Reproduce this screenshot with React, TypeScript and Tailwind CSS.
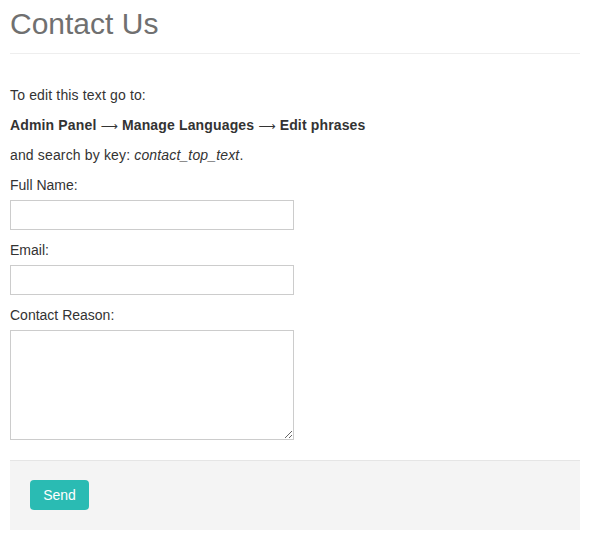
const Arrow = () => (
  <span className="font-normal font-['DejaVu_Sans',sans-serif] text-[12px] leading-none">⟶</span>
);

export default function App() {
  return (
    <div className="w-[596px] min-h-[541px] bg-white px-[10px] text-[14px] leading-[20px] text-[#333] font-['Liberation_Sans',Arial,sans-serif]">
      <div className="w-[570px]">
        <h1 className="pt-[7px] pb-[13px] border-b border-[#eee] text-[30px] leading-[33px] font-normal text-[#707070]">
          Contact Us
        </h1>

        <div className="mt-[31px] tracking-[0.15px]">
          <p className="mb-[10px]">To edit this text go to:</p>
          <p className="mb-[10px] h-[20px] font-bold">
            Admin Panel <Arrow /> Manage Languages <Arrow /> Edit phrases
          </p>
          <p className="mb-[10px]">
            and search by key: <i>contact_top_text</i>.
          </p>
        </div>

        <form className="flex flex-col">
          <label className="mb-[5px]">Full Name:</label>
          <input type="text" className="w-[284px] h-[30px] border border-[#ccc] bg-white px-2 outline-none" />

          <label className="mt-[10px] mb-[5px]">Email:</label>
          <input type="text" className="w-[284px] h-[30px] border border-[#ccc] bg-white px-2 outline-none" />

          <label className="mt-[10px] mb-[5px]">Contact Reason:</label>
          <textarea className="w-[284px] h-[110px] border border-[#ccc] bg-white p-2 outline-none resize" />

          <div className="mt-[20px] h-[70px] border-t border-[#e5e5e5] bg-[#f4f4f4] px-[20px] pt-[19px]">
            <button
              type="button"
              className="w-[59px] h-[30px] rounded-[4px] bg-[#2abbb3] text-white text-[14px] leading-[30px]"
            >
              Send
            </button>
          </div>
        </form>
      </div>
    </div>
  );
}
